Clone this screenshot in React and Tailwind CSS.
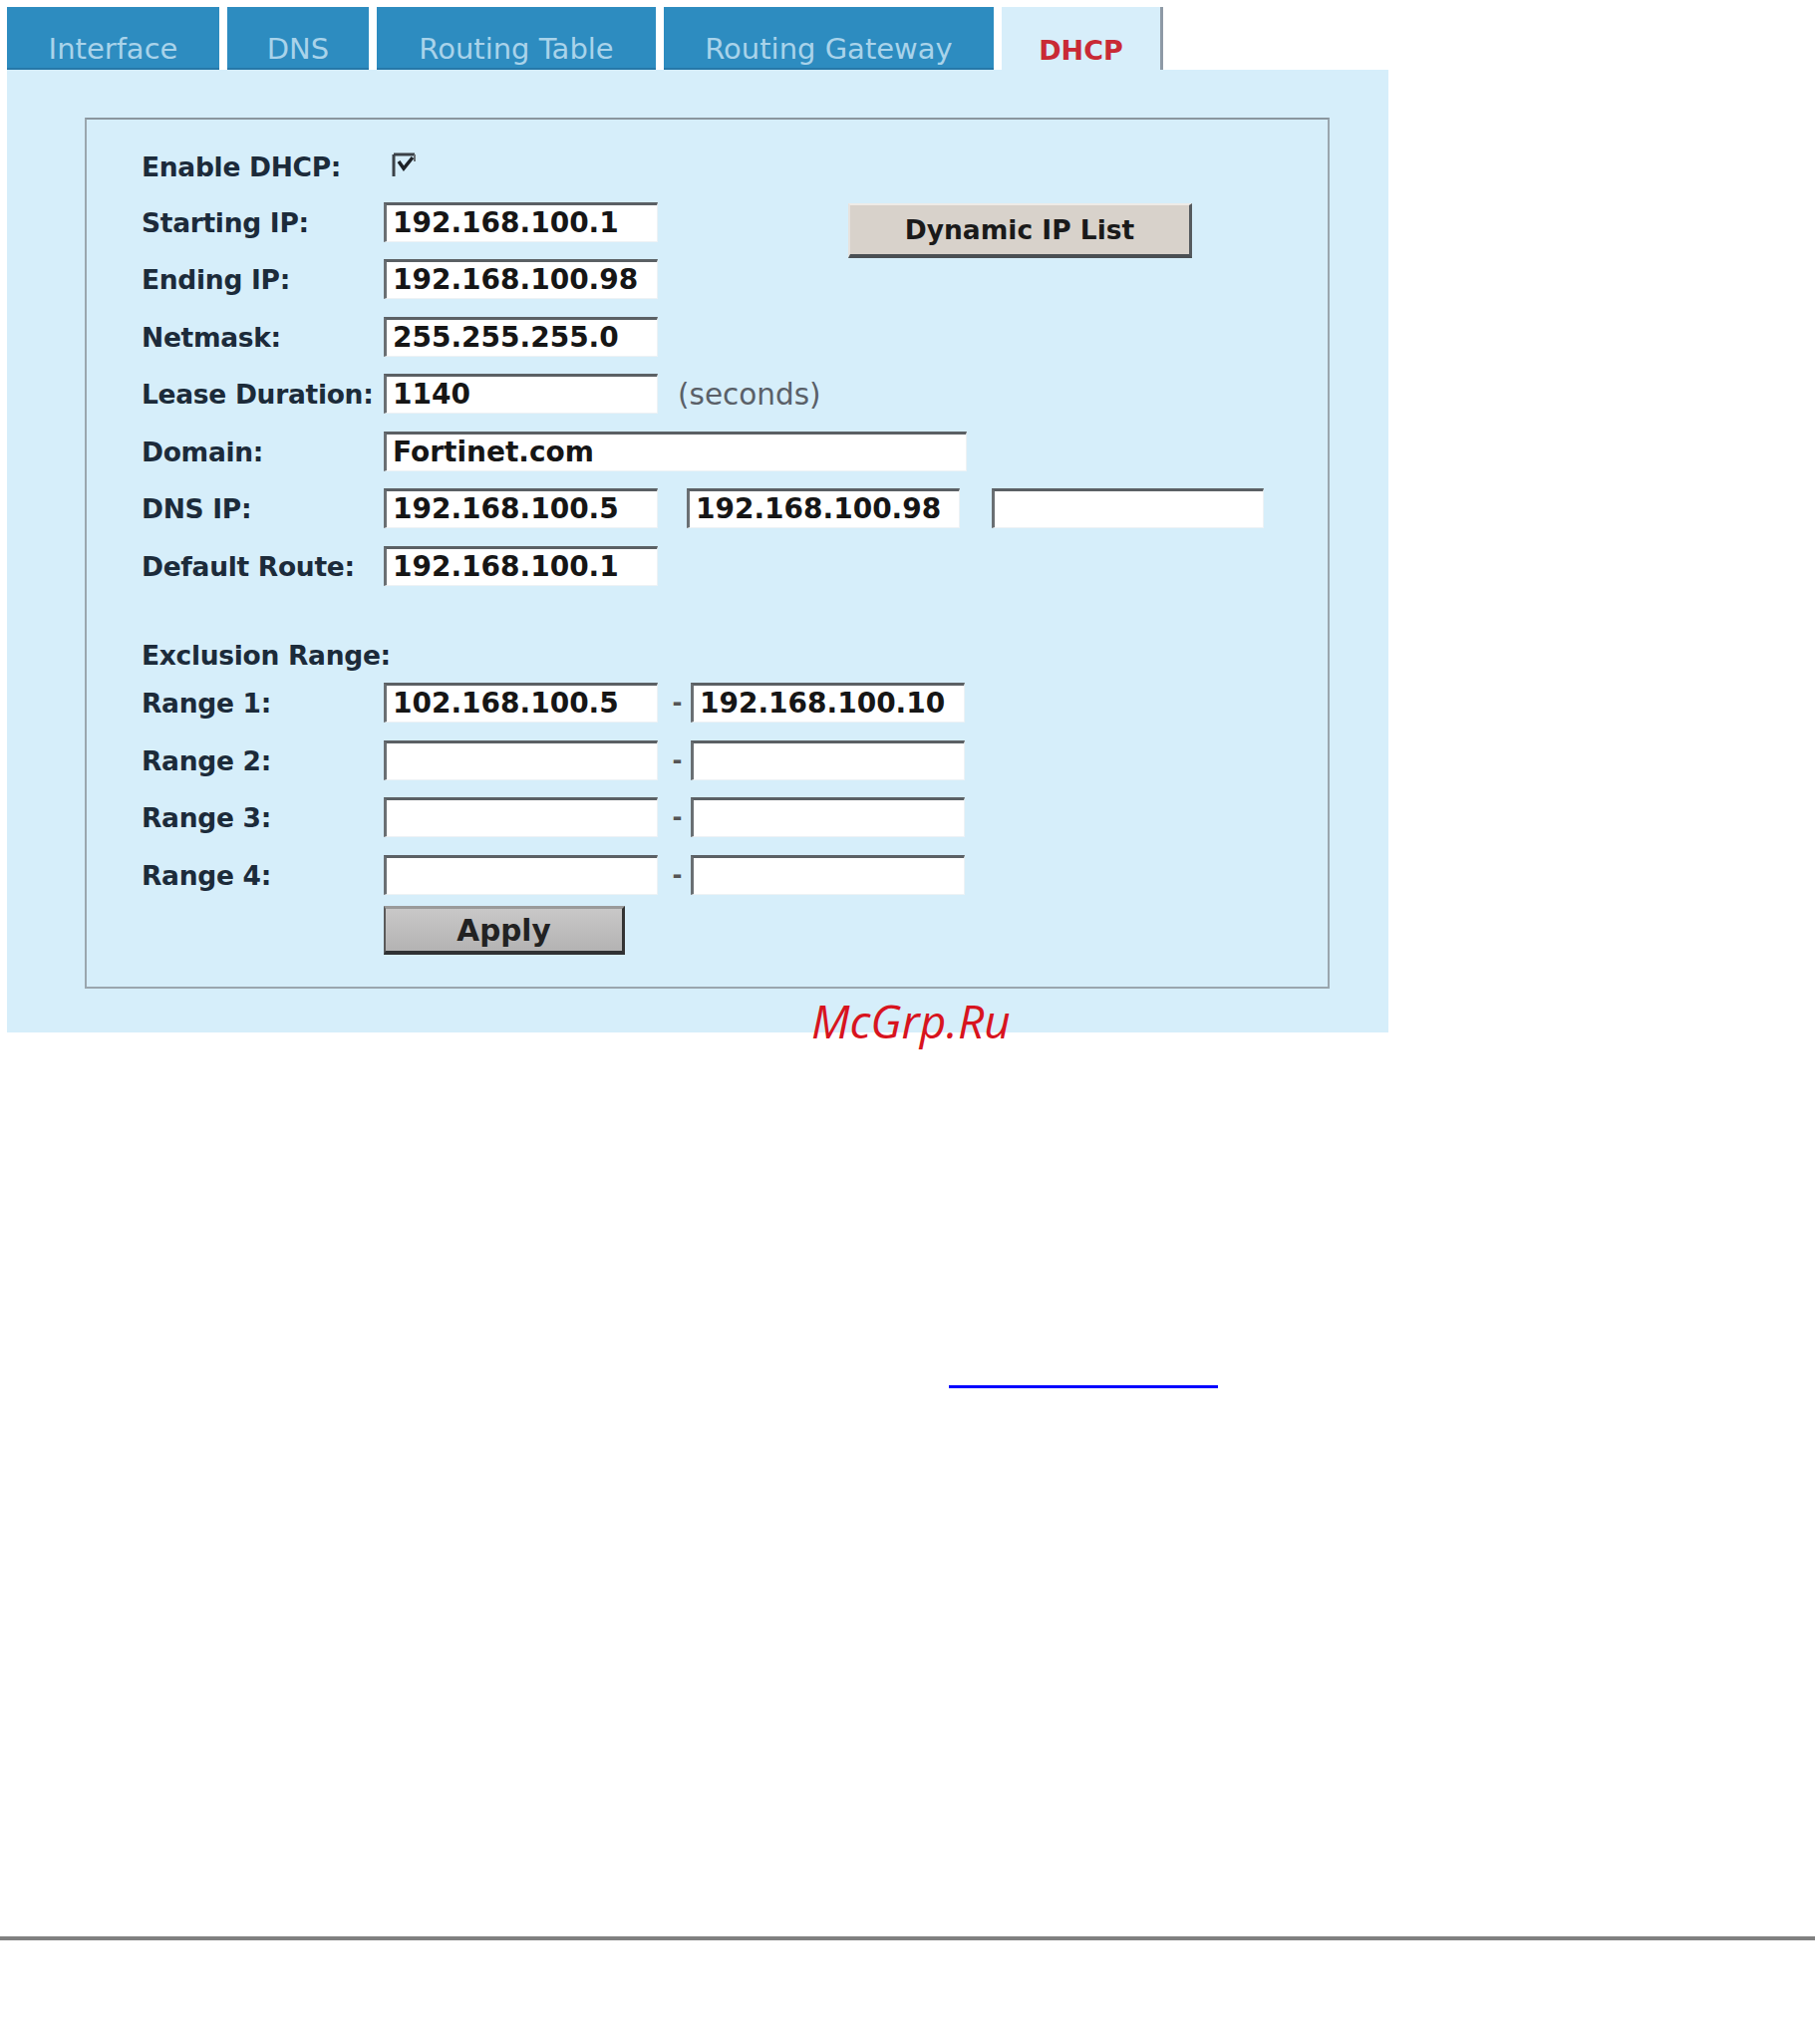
import React from 'react';

const tabs = [
  { label: 'Interface', width: 'w-[213px]' },
  { label: 'DNS', width: 'w-[142px]' },
  { label: 'Routing Table', width: 'w-[280px]' },
  { label: 'Routing Gateway', width: 'w-[331px]' },
];

function Field({ value = '', width = 'w-[275px]', className = '' }) {
  return (
    <input
      type="text"
      readOnly
      defaultValue={value}
      className={`${width} ${className} h-[40px] shrink-0 bg-white border-t-[3px] border-l-[3px] border-r border-b border-t-[#5b6064] border-l-[#6a6f73] border-r-[#edf2f5] border-b-[#edf2f5] pl-[6px] text-[28px] font-bold text-[#161616] outline-none`}
    />
  );
}

function Row({ label, children, tall = true }) {
  return (
    <div className={`flex items-center ${tall ? 'h-[57.5px]' : 'h-[55px]'}`}>
      <div className="w-[243px] shrink-0 pt-[2px] text-[26.5px] font-bold tracking-[-0.3px] text-[#1c2b3a]">{label}</div>
      {children}
    </div>
  );
}

function Dash() {
  return <div className="w-[33px] shrink-0 pl-[6px] text-center text-[24px] font-bold text-[#555]">-</div>;
}

export default function App() {
  const ranges = [
    ['102.168.100.5', '192.168.100.10'],
    ['', ''],
    ['', ''],
    ['', ''],
  ];

  return (
    <div className="relative min-h-screen bg-white font-['DejaVu_Sans',Verdana,sans-serif]">
      {/* tab strip */}
      <div className="flex gap-[8px] pt-[7px] pl-[7px] h-[70px]">
        {tabs.map((t) => (
          <div
            key={t.label}
            className={`${t.width} h-[63px] flex items-center justify-center pt-[25px] bg-[#2d8cc0] border-b-2 border-[#2678a8] text-[29px] text-[#a9d3ea]`}
          >
            {t.label}
          </div>
        ))}
        <div className="w-[162px] h-[63px] flex items-center justify-center pt-[25px] bg-[#d7eefa] border-r-[3px] border-[#8e9aa6] text-[27px] font-bold text-[#c92a35]">
          DHCP
        </div>
      </div>

      {/* panel */}
      <div className="ml-[7px] w-[1386px] h-[966px] bg-[#d6eefa] pt-[48px] pl-[78px]">
        <div className="w-[1249px] h-[874px] border-2 border-[#9aa6ae] border-t-[#8a969e] pt-[19px] pl-[55px]">
          <Row label="Enable DHCP:" tall={false}>
            <svg width="30" height="30" viewBox="0 0 30 30" className="ml-[6px] -mt-[2px]">
              <path d="M4 4h21M4 4v22" stroke="#3b4147" strokeWidth="3" fill="none" />
              <path d="M25 4v7" stroke="#6b7176" strokeWidth="2" fill="none" />
              <path d="M9 11l5 7 9-11" stroke="#1d2126" strokeWidth="3.5" fill="none" />
            </svg>
          </Row>
          <Row label="Starting IP:">
            <Field value="192.168.100.1" />
            <button className="self-start mt-[10px] ml-[191px] w-[345px] h-[55px] shrink-0 bg-[#d8d2cb] border-t-2 border-l-2 border-r-[3px] border-b-4 border-t-[#efebe7] border-l-[#e6e2de] border-r-[#555a5e] border-b-[#4a4f53] text-[26.5px] font-bold text-[#1a1a1a]">
              Dynamic IP List
            </button>
          </Row>
          <Row label="Ending IP:">
            <Field value="192.168.100.98" />
          </Row>
          <Row label="Netmask:">
            <Field value="255.255.255.0" />
          </Row>
          <Row label="Lease Duration:">
            <Field value="1140" />
            <span className="ml-[20px] pt-[2px] text-[29.5px] text-[#5a6068]">(seconds)</span>
          </Row>
          <Row label="Domain:">
            <Field value="Fortinet.com" width="w-[585px]" />
          </Row>
          <Row label="DNS IP:">
            <Field value="192.168.100.5" />
            <Field value="192.168.100.98" width="w-[274px]" className="ml-[29px]" />
            <Field width="w-[273px]" className="ml-[32px]" />
          </Row>
          <Row label="Default Route:">
            <Field value="192.168.100.1" />
          </Row>

          <div className="h-[40px]" />
          <div className="flex items-center h-[40px] pt-[2px] text-[26.5px] font-bold tracking-[-0.3px] text-[#1c2b3a]">
            Exclusion Range:
          </div>

          {ranges.map(([from, to], i) => (
            <Row key={i} label={`Range ${i + 1}:`}>
              <Field value={from} />
              <Dash />
              <Field value={to} />
            </Row>
          ))}

          <div className="flex mt-[2px]">
            <div className="w-[243px] shrink-0" />
            <button className="w-[242px] h-[49px] bg-gradient-to-b from-[#c9c8c8] to-[#b4b3b3] border-t-[3px] border-l-2 border-r-[3px] border-b-4 border-t-[#9a9a9a] border-l-[#5a5a5a] border-r-[#333] border-b-[#2f3133] text-[29.5px] font-bold text-[#222]">
              Apply
            </button>
          </div>
        </div>
      </div>

      {/* watermark */}
      <div className="absolute left-[814px] top-[1001px] leading-none text-[46px] italic text-[#d8141e] font-['Open_Sans',sans-serif]">
        McGrp.Ru
      </div>

      {/* empty link underline */}
      <div className="mt-[354px] ml-[952px] w-[270px] h-[3px] bg-[#0000ff]" />

      <div className="mt-[550px] h-[4px] bg-[#808080]" />
    </div>
  );
}
